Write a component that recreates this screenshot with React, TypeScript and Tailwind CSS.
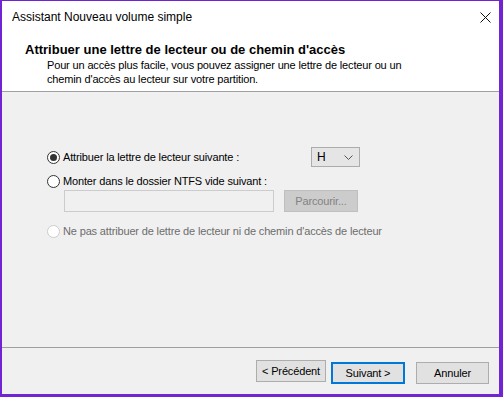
import React from 'react';

const font = { fontFamily: '"Liberation Sans", Arial, sans-serif' };

const Radio = ({ checked, disabled }: { checked?: boolean; disabled?: boolean }) => (
  <span
    className={`flex items-center justify-center w-[13px] h-[13px] rounded-full border bg-white shrink-0 ${disabled ? 'border-[#cccccc]' : 'border-[#333333]'}`}
  >
    {checked && <span className="w-[7px] h-[7px] rounded-full bg-[#333333]" />}
  </span>
);

const Btn = ({ label, primary, w }: { label: string; primary?: boolean; w: string }) => (
  <button
    className={`${w} h-[22px] text-[11px] tracking-[-0.15px] text-black bg-[#e1e1e1] ${primary ? 'border-2 border-[#0078d7]' : 'border border-[#adadad]'}`}
  >
    {label}
  </button>
);

export default function App() {
  return (
    <div style={font} className="w-[503px] h-[397px] bg-[#7124d4] pt-[1px] pl-[2px] pr-[4px] pb-[3px]">
      <div className="w-full h-full flex flex-col bg-white text-black">
        {/* barre de titre */}
        <div className="h-[32px] flex items-center justify-between pl-[10px] pr-[8px] shrink-0">
          <span className="text-[12px]">Assistant Nouveau volume simple</span>
          <svg width="11" height="11" viewBox="0 0 11 11">
            <path d="M0.5 0.5 L10.5 10.5 M10.5 0.5 L0.5 10.5" stroke="#111" strokeWidth="1" />
          </svg>
        </div>

        {/* en-tête */}
        <div className="h-[58px] shrink-0 pl-[23px] pt-[9px]">
          <p className="text-[13px] font-bold leading-[16px]">Attribuer une lettre de lecteur ou de chemin d'accès</p>
          <p className="text-[11px] tracking-[-0.15px] leading-[14px] pl-[22px]">
            Pour un accès plus facile, vous pouvez assigner une lettre de lecteur ou un
            <br />
            chemin d'accès au lecteur sur votre partition.
          </p>
        </div>
        <div className="h-px bg-[#a0a0a0] shrink-0" />

        {/* contenu */}
        <div className="flex-1 flex flex-col bg-[#f0f0f0]">
          <div className="flex-1 pl-[45px] pt-[55px] text-[11px] tracking-[-0.15px]">
            <div className="flex items-center h-[20px]">
              <Radio checked />
              <span className="ml-[3px] w-[248px]">Attribuer la lettre de lecteur suivante :</span>
              <div className="w-[49px] h-[20px] bg-[#e5e5e5] border border-[#acacac] flex items-center justify-between pl-[5px] pr-[6px] text-[12px]">
                <span>H</span>
                <svg width="9" height="5" viewBox="0 0 9 5">
                  <path d="M0.5 0.5 L4.5 4.5 L8.5 0.5" stroke="#555" fill="none" />
                </svg>
              </div>
            </div>
            <div className="flex items-center h-[20px] mt-[4px]">
              <Radio />
              <span className="ml-[3px]">Monter dans le dossier NTFS vide suivant :</span>
            </div>
            <div className="flex items-center -mt-[1px] pl-[17px]">
              <div className="w-[210px] h-[22px] bg-[#f0f0f0] border border-[#cccccc]" />
              <div className="ml-[10px] w-[74px] h-[22px] bg-[#cccccc] border border-[#bfbfbf] flex items-center justify-center text-[#838383]">
                Parcourir...
              </div>
            </div>
            <div className="flex items-center h-[20px] mt-[9px] text-[#6d6d6d]">
              <Radio disabled />
              <span className="ml-[3px]">Ne pas attribuer de lettre de lecteur ni de chemin d'accès de lecteur</span>
            </div>
          </div>
          <div className="h-px bg-[#a0a0a0]" />
          <div className="h-[46px] flex items-start pt-[12px] pl-[254px]">
            <Btn label="< Précédent" w="w-[70px]" />
            <div className="ml-[5px]">
              <Btn label="Suivant >" primary w="w-[74px]" />
            </div>
            <div className="ml-[11px]">
              <Btn label="Annuler" w="w-[73px]" />
            </div>
          </div>
        </div>
      </div>
    </div>
  );
}
